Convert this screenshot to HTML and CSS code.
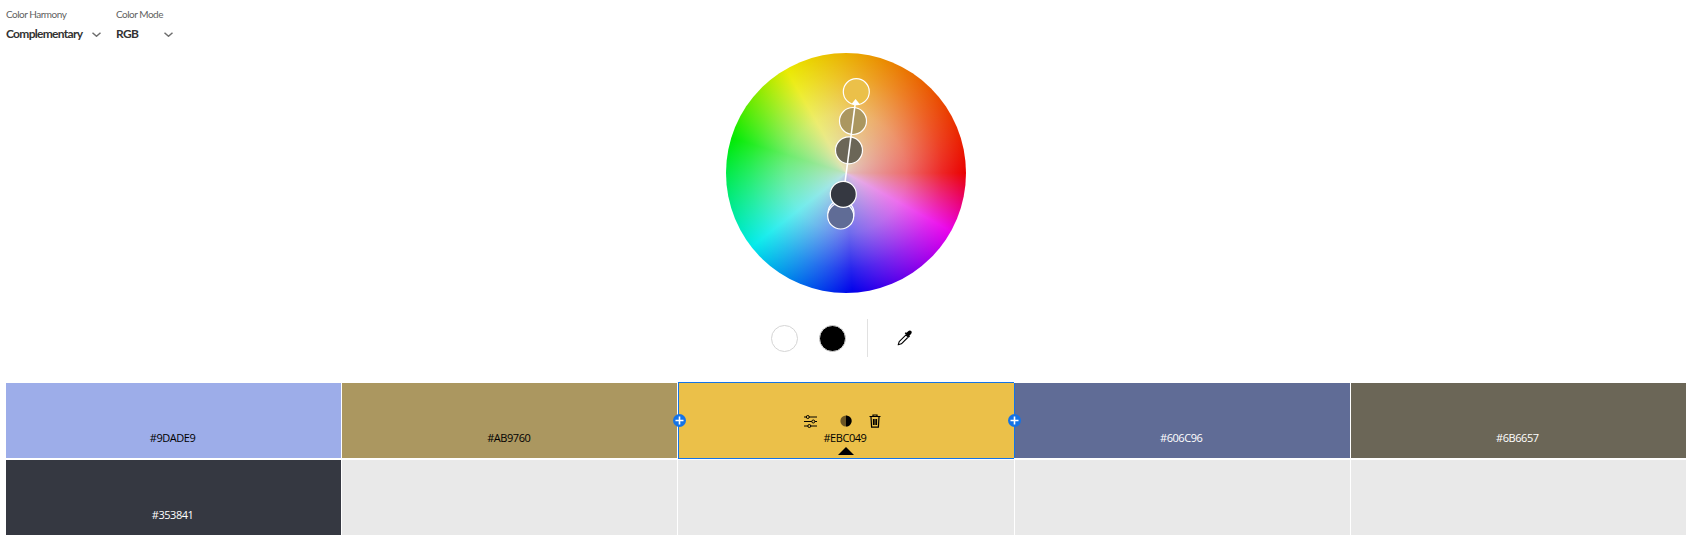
FILE: index.html
```html
<!DOCTYPE html>
<html>
  <head>
    <title>Color Wheel</title>
    <link rel="stylesheet" href="styles.css">
  </head>
  <body>
    <div class="header">
      <div class="picker picker-harmony">
        <div class="picker-label">Color Harmony</div>
        <div class="picker-value">
          <span>Complementary</span>
          <svg class="chevron" width="9" height="5" viewBox="0 0 9 5"><path d="M.5.7 4.5 4.2 8.5.7" /></svg>
        </div>
      </div>
      <div class="picker picker-mode">
        <div class="picker-label">Color Mode</div>
        <div class="picker-value">
          <span>RGB</span>
          <svg class="chevron" width="9" height="5" viewBox="0 0 9 5"><path d="M.5.7 4.5 4.2 8.5.7" /></svg>
        </div>
      </div>
    </div>

    <div class="wheel-area">
      <div class="wheel">
        <div class="wheel-glow"></div>
        <svg class="handles" width="240" height="240" viewBox="0 0 240 240">
          <circle cx="115" cy="160" r="13" fill="#9DADE9" stroke="#fff" stroke-width="1.2" />
          <circle cx="114.7" cy="163" r="13" fill="#606C96" stroke="#fff" stroke-width="1.2" />
          <circle cx="130.3" cy="38.7" r="13" fill="#EBC049" stroke="#fff" stroke-width="1.2" />
          <circle cx="127" cy="68" r="13.5" fill="#AB9760" stroke="#fff" stroke-width="1.2" />
          <circle cx="123" cy="97.3" r="13.5" fill="#6B6657" stroke="#fff" stroke-width="1.2" />
          <line x1="117.5" y1="141" x2="129.3" y2="50" stroke="#fff" stroke-width="1.6" />
          <polygon points="129.6,46 134,51.5 125.5,51" fill="#fff" />
          <circle cx="117.3" cy="141.3" r="13" fill="#353841" stroke="#fff" stroke-width="1.2" />
        </svg>
      </div>
    </div>

    <div class="tools">
      <div class="dot dot-white"></div>
      <div class="dot dot-black"></div>
      <div class="divider"></div>
      <svg class="dropper" width="16" height="16" viewBox="0 0 16 16">
        <path d="M11.2 1.3c.8-.9 2.2-1 3 -.2s.7 2.1-.2 3l-1.6 1.6.6.7-1.1 1.1-4.2-4.2 1.1-1.1.7.6z" fill="#000" />
        <path d="M9 4.8 2.2 11.6 1.2 14.8 4.4 13.8 11.2 7z" fill="#fff" stroke="#000" stroke-width="1.1" stroke-linejoin="round" />
      </svg>
    </div>

    <div class="swatches">
      <div class="swatch dark-text swatch-1"><span class="hex">#9DADE9</span></div>
      <div class="swatch dark-text swatch-2"><span class="hex">#AB9760</span></div>
      <div class="swatch dark-text swatch-3 selected">
        <span class="add add-left"><svg width="9" height="9" viewBox="0 0 9 9"><path d="M4.5.5v8M.5 4.5h8" /></svg></span>
        <div class="cell-tools">
          <svg width="13" height="13" viewBox="0 0 13 13" class="icon-sliders">
            <path d="M0 2h13M0 6.5h13M0 11h13" />
            <circle cx="3.8" cy="2" r="1.5" />
            <circle cx="9.3" cy="6.5" r="1.5" />
            <circle cx="5.3" cy="11" r="1.5" />
          </svg>
          <svg width="12" height="12" viewBox="0 0 12 12" class="icon-contrast">
            <circle cx="6" cy="6" r="5.6" fill="#6b5524" />
            <path d="M6 .4a5.6 5.6 0 0 1 0 11.2z" fill="#000" />
          </svg>
          <svg width="12" height="14" viewBox="0 0 12 14" class="icon-trash">
            <path d="M.5 2.5h11M4 2.3V1h4v1.3M2 3l.6 10.2h6.8L10 3M4.5 5v6M6 5v6M7.5 5v6" />
          </svg>
        </div>
        <span class="hex">#EBC049</span>
        <span class="caret"></span>
        <span class="add add-right"><svg width="9" height="9" viewBox="0 0 9 9"><path d="M4.5.5v8M.5 4.5h8" /></svg></span>
      </div>
      <div class="swatch light-text swatch-4"><span class="hex">#606C96</span></div>
      <div class="swatch light-text swatch-5"><span class="hex">#6B6657</span></div>
      <div class="swatch light-text swatch-6"><span class="hex">#353841</span></div>
      <div class="swatch empty"></div>
      <div class="swatch empty"></div>
      <div class="swatch empty"></div>
      <div class="swatch empty"></div>
    </div>
  </body>
</html>
```

FILE: styles.css
```css
body {
  margin: 0;
  font-family: Lato, "Open Sans", sans-serif;
  background-color: #fff;
  color: #2c2c2c;
}

.header {
  display: flex;
  height: 53px;
  padding-left: 6px;
}

.picker {
  padding-top: 7px;
}

.picker-harmony {
  width: 110px;
}

.picker-mode {
  width: 72px;
}

.picker-label {
  font-size: 10px;
  letter-spacing: -0.5px;
  line-height: 14px;
  color: #5f5f5f;
}

.picker-value {
  display: flex;
  align-items: center;
  justify-content: space-between;
  margin-top: 6px;
  padding-right: 15px;
  font-size: 12px;
  letter-spacing: -0.7px;
  font-weight: 700;
  line-height: 14px;
  color: #323232;
}

.chevron {
  fill: none;
  stroke: #6e6e6e;
  stroke-width: 1.5;
}

.wheel-area {
  display: flex;
  justify-content: center;
  padding-left: 2px;
}

.wheel {
  position: relative;
  width: 240px;
  height: 240px;
  border-radius: 50%;
  background: conic-gradient(from -30deg, #eaea00 0deg, #ea0000 120deg, #ea00ea 149deg, #0000ea 207deg, #00eaea 262deg, #00ea00 317deg, #eaea00 360deg);
}

.wheel-glow {
  position: absolute;
  inset: 0;
  border-radius: 50%;
  background: radial-gradient(circle closest-side, rgba(225, 225, 225, 0.85) 0%, rgba(240, 240, 240, 0.45) 50%, rgba(255, 255, 255, 0.15) 80%, rgba(255, 255, 255, 0) 100%);
}

.handles {
  position: absolute;
  top: 0;
  left: 0;
}

.tools {
  display: flex;
  align-items: center;
  justify-content: center;
  height: 90px;
  padding-right: 6px;
}

.dot {
  box-sizing: border-box;
  width: 27px;
  height: 27px;
  border-radius: 50%;
  border: 1px solid #d5d5d5;
}

.dot-white {
  background-color: #fff;
}

.dot-black {
  margin-left: 21px;
  background-color: #000;
}

.divider {
  width: 1px;
  height: 38px;
  margin-left: 21px;
  background-color: #e1e1e1;
}

.dropper {
  margin-left: 29px;
}

.swatches {
  display: grid;
  grid-template-columns: repeat(5, 335.2px);
  grid-auto-rows: 75px;
  column-gap: 1px;
  row-gap: 2px;
  padding-left: 6px;
}

.swatch {
  position: relative;
  display: flex;
  flex-direction: column;
  align-items: center;
  justify-content: flex-end;
  padding-bottom: 13px;
  box-sizing: border-box;
}

.hex {
  font-family: "Open Sans", sans-serif;
  font-size: 11px;
  font-weight: 500;
  letter-spacing: -0.45px;
  line-height: 14px;
  margin-right: 2px;
}

.dark-text {
  color: #000;
}

.light-text {
  color: #fff;
}

.swatch-1 { background-color: #9dade9; }
.swatch-2 { background-color: #ab9760; }
.swatch-3 { background-color: #ebc049; }
.swatch-4 { background-color: #606c96; }
.swatch-5 { background-color: #6b6657; }
.swatch-6 { background-color: #353841; }

.empty {
  background-color: #e9e9e9;
}

.selected {
  box-shadow: inset 1px 0 #1473e6, 1px 0 #1473e6, 0 -1px #1473e6, 0 1px #1473e6;
  z-index: 1;
}

.cell-tools {
  display: flex;
  align-items: center;
  gap: 17px;
  margin-bottom: 3px;
  margin-right: 6px;
}

.icon-sliders {
  margin-right: 6px;
  fill: #ebc049;
  stroke: #000;
  stroke-width: 1;
}

.icon-trash {
  fill: none;
  stroke: #000;
  stroke-width: 1.2;
}

.caret {
  position: absolute;
  left: 50%;
  bottom: 3px;
  margin-left: -8px;
  border-left: 8px solid transparent;
  border-right: 8px solid transparent;
  border-bottom: 8px solid #000;
}

.add {
  position: absolute;
  top: 31px;
  display: flex;
  align-items: center;
  justify-content: center;
  width: 13px;
  height: 13px;
  border-radius: 50%;
  background-color: #1473e6;
}

.add svg {
  fill: none;
  stroke: #fff;
  stroke-width: 1.6;
}

.add-left {
  left: -5px;
}

.add-right {
  right: -7px;
}
```
